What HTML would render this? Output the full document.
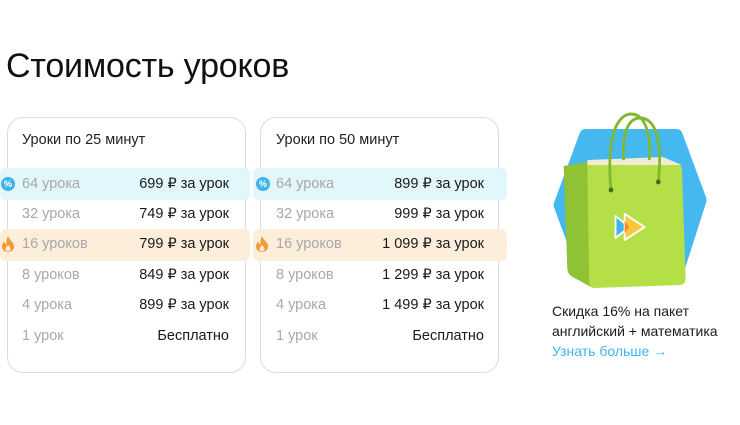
<!DOCTYPE html>
<html><head><meta charset="utf-8"><style>
*{margin:0;padding:0;box-sizing:border-box}
body{width:740px;height:425px;background:#fff;position:relative;overflow:hidden;font-family:"Liberation Sans","DejaVu Sans",sans-serif;color:#1a1a1a}
.t{position:absolute;left:6px;top:47px;font-size:34px;letter-spacing:-0.2px;color:#111}
.card{position:absolute;top:117px;width:239px;height:256px;border:1px solid #dcdcdc;border-radius:16px}
.hd{position:absolute;top:132px;font-size:14.5px;color:#222}
.hl{position:absolute;height:32px;border-radius:6px}
.row{position:absolute;font-size:14.5px;height:20px;line-height:20px}
.l{color:#a8a8a8}
.r{text-align:right;color:#1a1a1a}
.ic{position:absolute;width:14px;height:14px;border-radius:50%;background:#3fb3ee;color:#fff;font-size:9px;font-weight:bold;text-align:center;line-height:14px}
.txt{position:absolute;left:552px;font-size:14px;color:#1a1a1a}
</style></head><body>
<div class="t">Стоимость уроков</div>

<div class="card" style="left:7px"></div>
<div class="card" style="left:260px"></div>
<div class="hd" style="left:22px">Уроки по 25 минут</div>
<div class="hd" style="left:276px">Уроки по 50 минут</div>

<div class="hl" style="left:0;top:168px;width:250px;background:#e1f7fc"></div>
<div class="hl" style="left:253px;top:168px;width:254px;background:#e1f7fc"></div>
<div class="hl" style="left:0;top:229px;width:250px;background:#fdeedc"></div>
<div class="hl" style="left:253px;top:229px;width:254px;background:#fdeedc"></div>

<div class="ic" style="left:1px;top:177px">%</div>
<div class="ic" style="left:256px;top:177px">%</div>
<svg style="position:absolute;left:2px;top:236px" width="12" height="16" viewBox="0 0 12 16"><path d="M6 0C7 4 12 6 12 10.5C12 14 9 16 6 16C3 16 0 14 0 10.5C0 8 1.5 6.5 2.5 5.5C2.8 7.5 3.5 8.5 4.5 8.5C4 5 5 2 6 0Z" fill="#f39a2e"/><path d="M6 9C7.5 10.5 8.5 11.5 8.5 13C8.5 14.5 7.3 15.3 6 15.3C4.7 15.3 3.5 14.5 3.5 13C3.5 11.5 5 10.5 6 9Z" fill="#fdeedc"/></svg>
<svg style="position:absolute;left:256px;top:236px" width="12" height="16" viewBox="0 0 12 16"><path d="M6 0C7 4 12 6 12 10.5C12 14 9 16 6 16C3 16 0 14 0 10.5C0 8 1.5 6.5 2.5 5.5C2.8 7.5 3.5 8.5 4.5 8.5C4 5 5 2 6 0Z" fill="#f39a2e"/><path d="M6 9C7.5 10.5 8.5 11.5 8.5 13C8.5 14.5 7.3 15.3 6 15.3C4.7 15.3 3.5 14.5 3.5 13C3.5 11.5 5 10.5 6 9Z" fill="#fdeedc"/></svg>

<div class="row l" style="left:22px;top:174px">64 урока</div><div class="row r" style="left:100px;width:129px;top:174px">699 ₽ за урок</div>
<div class="row l" style="left:22px;top:204px">32 урока</div><div class="row r" style="left:100px;width:129px;top:204px">749 ₽ за урок</div>
<div class="row l" style="left:22px;top:234px">16 уроков</div><div class="row r" style="left:100px;width:129px;top:234px">799 ₽ за урок</div>
<div class="row l" style="left:22px;top:265px">8 уроков</div><div class="row r" style="left:100px;width:129px;top:265px">849 ₽ за урок</div>
<div class="row l" style="left:22px;top:295px">4 урока</div><div class="row r" style="left:100px;width:129px;top:295px">899 ₽ за урок</div>
<div class="row l" style="left:22px;top:326px">1 урок</div><div class="row r" style="left:100px;width:129px;top:326px">Бесплатно</div>

<div class="row l" style="left:276px;top:174px">64 урока</div><div class="row r" style="left:350px;width:134px;top:174px">899 ₽ за урок</div>
<div class="row l" style="left:276px;top:204px">32 урока</div><div class="row r" style="left:350px;width:134px;top:204px">999 ₽ за урок</div>
<div class="row l" style="left:276px;top:234px">16 уроков</div><div class="row r" style="left:350px;width:134px;top:234px">1 099 ₽ за урок</div>
<div class="row l" style="left:276px;top:265px">8 уроков</div><div class="row r" style="left:350px;width:134px;top:265px">1 299 ₽ за урок</div>
<div class="row l" style="left:276px;top:295px">4 урока</div><div class="row r" style="left:350px;width:134px;top:295px">1 499 ₽ за урок</div>
<div class="row l" style="left:276px;top:326px">1 урок</div><div class="row r" style="left:350px;width:134px;top:326px">Бесплатно</div>

<svg style="position:absolute;left:540px;top:110px" width="200" height="190" viewBox="0 0 200 190">
<g transform="scale(0.91,1)">
<path d="M50 26 L150 26 L176 90 L150 164 L50 164 L22 95Z" fill="#46b8f0" stroke="#46b8f0" stroke-width="14" stroke-linejoin="round"/>
<path d="M26 56 L52 52 L56 177 L38 168 Q30 165 30 158Z" fill="#8fc234"/>
<path d="M52 50 L135 47 L156 55 L52 57Z" fill="#f0ecd0"/>
<path d="M52 55 L152 55 Q156 55 156 60 L160 168 Q160 175 153 175 L60 178 Q54 178 54 172Z" fill="#b4df46"/>
<path d="M78 80 C72 20 88 4 100 4 C118 4 122 30 120 50" fill="none" stroke="#82b92c" stroke-width="3"/>
<path d="M130 72 C136 20 122 8 110 8 C96 8 90 25 92 50" fill="none" stroke="#82b92c" stroke-width="3"/>
<circle cx="78" cy="80" r="2.5" fill="#4a6a18"/><circle cx="130" cy="72" r="2.5" fill="#4a6a18"/>
<path d="M83 106 L98 117 L83 128Z" fill="#3fb3ee" stroke="#fff" stroke-width="2" stroke-linejoin="round"/>
<path d="M93 104 L115 117 L93 130Z" fill="#f8c83a" stroke="#fff" stroke-width="2" stroke-linejoin="round"/>
<path d="M93 111 L98 117 L93 123Z" fill="#f08a2a"/>
</g>
</svg>

<div class="txt" style="top:303px">Скидка 16% на пакет</div>
<div class="txt" style="top:323px">английский + математика</div>
<div class="txt" style="top:343px;color:#3fb3ee">Узнать больше →</div>
</body></html>
